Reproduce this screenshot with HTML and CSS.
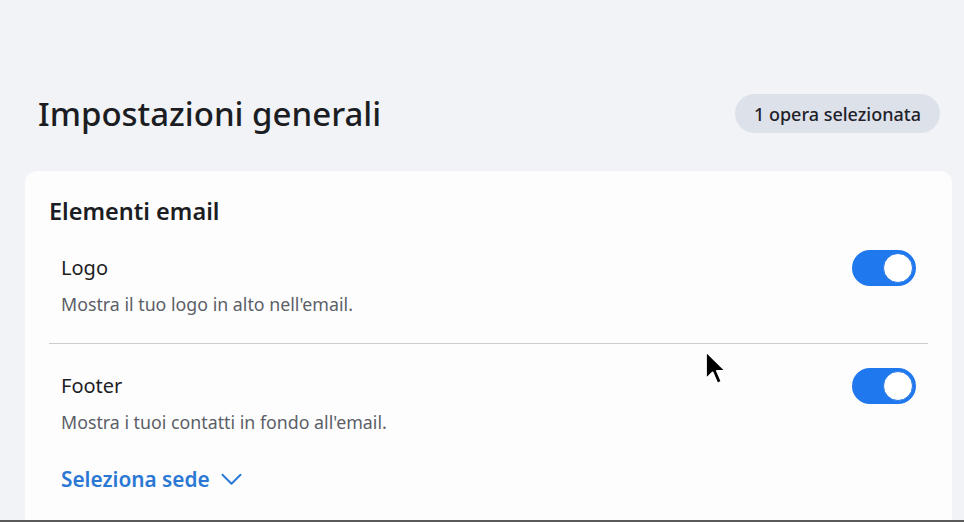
FILE: index.html
```html
<!DOCTYPE html>
<html lang="it">
<head>
<meta charset="utf-8">
<title>Impostazioni generali</title>
<link rel="stylesheet" href="styles.css">
</head>
<body>
<div class="page">
  <header class="header">
    <h1 class="title">Impostazioni generali</h1>
    <span class="badge">1 opera selezionata</span>
  </header>
  <section class="card">
    <h2 class="card-title">Elementi email</h2>
    <div class="row">
      <div class="row-text">
        <div class="label">Logo</div>
        <div class="desc">Mostra il tuo logo in alto nell'email.</div>
      </div>
      <span class="toggle on"><span class="knob"></span></span>
    </div>
    <div class="divider"></div>
    <div class="row">
      <div class="row-text">
        <div class="label">Footer</div>
        <div class="desc">Mostra i tuoi contatti in fondo all'email.</div>
      </div>
      <span class="toggle on"><span class="knob"></span></span>
    </div>
    <button class="link">Seleziona sede
      <svg class="chev" width="22" height="13" viewBox="0 0 22 13"><path d="M1.5 1.5 L11 11 L20.5 1.5" fill="none" stroke="currentColor" stroke-width="2" stroke-linecap="round" stroke-linejoin="round"/></svg>
    </button>
  </section>
  <svg class="cursor" width="24" height="38" viewBox="0 0 24 38"><path d="M2 1.5 L2 29 L8.6 22.4 L13.4 33.5 L17.6 31.6 L12.9 20.8 L21.6 20.8 Z" fill="#000" stroke="#fff" stroke-width="1.8" stroke-linejoin="round"/></svg>
</div>
</body>
</html>
```
FILE: styles.css
```css
* { box-sizing: border-box; }
html, body { margin: 0; padding: 0; }
body {
  font-family: "Noto Sans", "Open Sans", sans-serif;
  background: #f1f3f7;
  color: #1d1f24;
}
.page {
  position: relative;
  height: 522px;
  overflow: hidden;
  border-bottom: 2px solid #5a5a5a;
  padding-top: 94px;
}
.header {
  display: flex;
  align-items: center;
  justify-content: space-between;
  padding: 0 24px 0 38px;
  height: 39px;
}
.title {
  margin: 0;
  font-size: 33px;
  font-weight: 500;
  color: #1b1d22;
}
.badge {
  display: inline-flex;
  align-items: center;
  height: 39px;
  padding: 0 19px;
  border-radius: 20px;
  background: #dde1ea;
  font-size: 18px;
  font-weight: 500;
  color: #1f2229;
}
.card {
  margin: 38px 12px 0 25px;
  background: #fdfdfe;
  border-radius: 12px;
  padding: 24px 24px 40px;
  height: 400px;
}
.card-title {
  margin: 0 0 26px;
  font-size: 23.5px;
  font-weight: 600;
  line-height: 32px;
  color: #1b1d22;
}
.row {
  display: flex;
  justify-content: space-between;
  align-items: flex-start;
  padding: 0 12px;
}
.label {
  font-size: 20px;
  line-height: 30px;
  color: #1d1f24;
}
.desc {
  margin-top: 9px;
  font-size: 17.8px;
  line-height: 24px;
  color: #5c5f66;
}
.toggle {
  margin-top: -3px;
  width: 64px;
  height: 36px;
  border-radius: 18px;
  background: #1f78ee;
  display: flex;
  align-items: center;
  justify-content: flex-end;
  padding: 0 3px;
}
.knob {
  width: 30px;
  height: 30px;
  border-radius: 50%;
  background: #fff;
  border: 1px solid #2a7be6;
}
.divider {
  height: 1px;
  background: #cccdd0;
  margin: 27px 0 27px;
}
.link {
  margin: 31px 0 0 12px;
  padding: 0;
  border: 0;
  background: none;
  font-family: inherit;
  font-size: 20.8px;
  line-height: 28px;
  font-weight: 600;
  color: #2b78d4;
  display: inline-flex;
  align-items: center;
  gap: 11px;
  cursor: pointer;
}
.chev { color: #2b78d4; width: 21px; height: 13px; }
.cursor {
  position: absolute;
  left: 704px;
  top: 350px;
}
```
